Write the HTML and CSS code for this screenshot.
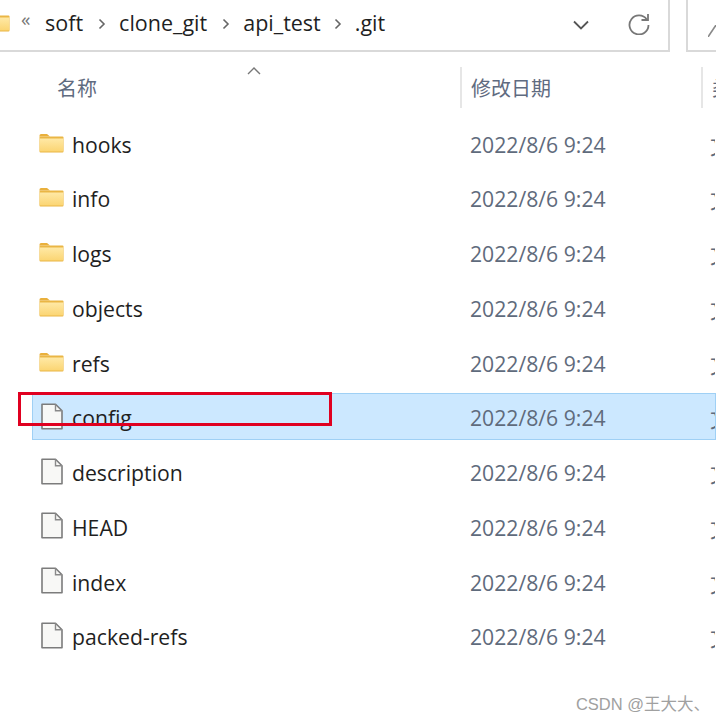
FILE: index.html
```html
<!DOCTYPE html>
<html lang="zh">
<head>
<meta charset="utf-8">
<title>.git</title>
<link rel="stylesheet" href="styles.css">
</head>
<body>
<svg class="defs" width="0" height="0">
  <defs>
    <linearGradient id="fg" x1="0" y1="0" x2="0" y2="1"><stop offset="0" stop-color="#ffe9a6"/><stop offset="1" stop-color="#fbd573"/></linearGradient>
    <symbol id="folder" viewBox="0 0 25 20">
      <path d="M0.5 2.500Q0.500 1 2 1H8L11 3.500H0.500Z" fill="#e9b03c"/>
      <path d="M0.500 3.500H23.500Q24.500 3.500 24.500 4.500V18.500Q24.500 19.500 23.500 19.500H1.500Q0.500 19.500 0.500 18.500Z" fill="#eab645"/>
      <path d="M0.700 5.500H24.300V17.700Q24.300 18.500 23.500 18.500H1.500Q0.700 18.500 0.700 17.700Z" fill="url(#fg)"/>
    </symbol>
    <symbol id="file" viewBox="0 0 22 27">
      <path d="M1 1.200H14.500L21 7.700V25.800H1Z" fill="#f8f8f6" stroke="#7c7c7c" stroke-width="1.600" stroke-linejoin="round"/>
      <path d="M14.500 1.200V7.700H21" fill="none" stroke="#8a8a8a" stroke-width="1.400"/>
    </symbol>
  </defs>
</svg>
<div class="window">
  <header class="toolbar">
    <div class="address">
      <svg class="crumb-folder" width="10" height="20" viewBox="15 0 10 20"><use href="#folder" width="25" height="20"/></svg>
      <span class="chev-double">«</span>
      <span class="crumb">soft</span>
      <svg class="sep" width="8" height="12" viewBox="0 0 8 12"><path d="M1.500 1.500 6 6l-4.500 4.500"/></svg>
      <span class="crumb">clone_git</span>
      <svg class="sep" width="8" height="12" viewBox="0 0 8 12"><path d="M1.500 1.500 6 6l-4.500 4.500"/></svg>
      <span class="crumb">api_test</span>
      <svg class="sep sep-last" width="8" height="12" viewBox="0 0 8 12"><path d="M1.500 1.500 6 6l-4.500 4.500"/></svg>
      <span class="crumb">.git</span>
      <span class="spacer"></span>
      <svg class="dropdown" width="16" height="10" viewBox="0 0 16 10"><path d="M1 1.500 8 8.500 15 1.500"/></svg>
      <svg class="refresh" width="22" height="22" viewBox="0 0 22 22"><path d="M18.800 6.500A9.500 9.500 0 1 0 20.500 12"/><path d="M20 1v6h-6.500"/></svg>
    </div>
    <div class="search">
      <svg class="search-icon" width="8" height="12" viewBox="0 0 8 12"><path d="M8 0 0 12"/></svg>
    </div>
  </header>

  <div class="columns">
    <svg class="sort" width="14" height="8" viewBox="0 0 14 8"><path d="M1 7 7 1l6 6"/></svg>
    <div class="col col-name">名称</div>
    <div class="col col-date">修改日期</div>
    <div class="col col-type">类型</div>
  </div>

  <main class="list">
    <div class="row"><svg class="ic-folder"><use href="#folder"/></svg><span class="name">hooks</span><span class="date">2022/8/6 9:24</span><span class="type">文件夹</span></div>
    <div class="row"><svg class="ic-folder"><use href="#folder"/></svg><span class="name">info</span><span class="date">2022/8/6 9:24</span><span class="type">文件夹</span></div>
    <div class="row"><svg class="ic-folder"><use href="#folder"/></svg><span class="name">logs</span><span class="date">2022/8/6 9:24</span><span class="type">文件夹</span></div>
    <div class="row"><svg class="ic-folder"><use href="#folder"/></svg><span class="name">objects</span><span class="date">2022/8/6 9:24</span><span class="type">文件夹</span></div>
    <div class="row"><svg class="ic-folder"><use href="#folder"/></svg><span class="name">refs</span><span class="date">2022/8/6 9:24</span><span class="type">文件夹</span></div>
    <div class="row selected"><svg class="ic-file"><use href="#file"/></svg><span class="name">config</span><span class="date">2022/8/6 9:24</span><span class="type">文件</span></div>
    <div class="row"><svg class="ic-file"><use href="#file"/></svg><span class="name">description</span><span class="date">2022/8/6 9:24</span><span class="type">文件</span></div>
    <div class="row"><svg class="ic-file"><use href="#file"/></svg><span class="name">HEAD</span><span class="date">2022/8/6 9:24</span><span class="type">文件</span></div>
    <div class="row"><svg class="ic-file"><use href="#file"/></svg><span class="name">index</span><span class="date">2022/8/6 9:24</span><span class="type">文件</span></div>
    <div class="row"><svg class="ic-file"><use href="#file"/></svg><span class="name">packed-refs</span><span class="date">2022/8/6 9:24</span><span class="type">文件</span></div>
  </main>

  <div class="highlight"></div>
  <div class="watermark">CSDN @王大大、</div>
</div>
</body>
</html>
```
FILE: styles.css
```css
* { box-sizing: border-box; }
html, body { margin: 0; padding: 0; background: #fff; }
body { width: 716px; height: 722px; overflow: hidden; font-family: "Open Sans", "Noto Sans CJK SC", sans-serif; }
.defs { position: absolute; }
.window { position: relative; width: 716px; height: 722px; overflow: hidden; }

.toolbar { display: flex; height: 52px; }
.address { width: 670px; height: 52px; display: flex; align-items: center; border: solid #d9d9d9; border-width: 0 2px 2px 0; color: #1f1f1f; font-size: 21.500px; padding-bottom: 6px; }
.crumb-folder { margin-right: 11px; }
.chev-double { width: 14px; margin-right: 10px; font-size: 19px; color: #777; line-height: 1; padding-bottom: 5px; }
.sep { margin: 4px 13px 0 15px; }
.sep-last { margin-left: 13px; }
.sep path { fill: none; stroke: #666; stroke-width: 1.600; }
.spacer { flex: 1; }
.dropdown { margin-right: 39px; margin-top: 5px; }
.dropdown path { fill: none; stroke: #555; stroke-width: 1.800; }
.refresh { margin-right: 18px; margin-top: 3px; }
.refresh path { fill: none; stroke: #777; stroke-width: 1.800; }
.search { margin-left: 16px; flex: 1; height: 52px; border: solid #d9d9d9; border-width: 0 0 2px 2px; padding: 20px 0 0 20px; }
.search-icon path { fill: none; stroke: #888; stroke-width: 1.600; }

.columns { position: relative; height: 67px; display: grid; grid-template-columns: 460px 241px 15px; padding-top: 15px; }
.col { height: 41px; font-size: 20px; color: #5f6b80; display: flex; align-items: center; white-space: nowrap; overflow: hidden; }
.col-name { padding-left: 57px; }
.col-date, .col-type { border-left: 2px solid #e6e6e6; padding-left: 9px; }
.sort { position: absolute; left: 247px; top: 15px; }
.sort path { fill: none; stroke: #777; stroke-width: 1.400; }

.list { display: grid; grid-auto-rows: 47px; row-gap: 7.780px; margin-left: 32px; }
.row { display: grid; grid-template-columns: 39px 398px 240px 1fr; align-items: center; white-space: nowrap; overflow: hidden; border: 1px solid transparent; font-size: 21.200px; padding-top: 3px; }
.row svg { margin-top: -3px; }
.selected { background: #cce8ff; border-color: #9fd0f5; }
.ic-folder { width: 25px; height: 20px; margin-left: 6px; }
.ic-file { width: 22px; height: 27px; margin-left: 8px; }
.name { color: #1f1f1f; }
.date { color: #5f6b7c; }
.type { color: #5f6b7c; }

.highlight { position: absolute; left: 18px; top: 392px; width: 314px; height: 34px; border: 3px solid #e00020; }
.watermark { position: absolute; right: 6px; top: 691px; font-family: "Liberation Sans", "Noto Sans CJK SC", sans-serif; font-size: 16.500px; color: #a0a0a0; white-space: nowrap; }
```
